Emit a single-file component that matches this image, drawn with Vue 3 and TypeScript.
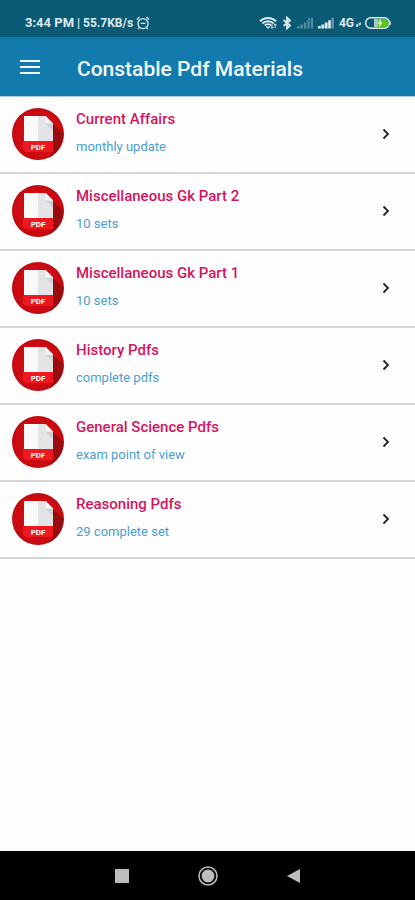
<script setup lang="ts">
interface Material {
  title: string
  note: string
}

const materials: Material[] = [
  { title: 'Current Affairs', note: 'monthly update' },
  { title: 'Miscellaneous Gk Part 2', note: '10 sets' },
  { title: 'Miscellaneous Gk Part 1', note: '10 sets' },
  { title: 'History Pdfs', note: 'complete pdfs' },
  { title: 'General Science Pdfs', note: 'exam point of view' },
  { title: 'Reasoning Pdfs', note: '29 complete set' },
]
</script>

<template>
  <div class="screen">
    <div class="status">
      <div class="status-left">
        <span>3:44 PM</span>
        <span class="rate">| 55.7KB/s</span>
        <svg width="14" height="14" viewBox="0 0 14 14" fill="none" stroke="currentColor" stroke-width="1.3" aria-hidden="true">
          <circle cx="7" cy="7.6" r="5" />
          <path d="M0.8 3.4 3.6 1M13.2 3.4 10.4 1M4.6 7.4h4.8M3.4 11.6l-1.2 1.6M10.6 11.6l1.2 1.6" />
        </svg>
      </div>
      <div class="status-right">
        <svg class="wifi" width="19" height="14" viewBox="0 0 19 14" fill="none" stroke="currentColor" aria-hidden="true">
          <path d="M1 5.2C5.4.8 12.6.8 17 5.2M3.4 7.4c3.2-3 8-3 11.2 0M5.8 9.5c1.8-1.8 4.600-1.800 6.400 0" stroke-width="2" />
          <path d="M6.6 10.4h4.8L9 13z" fill="currentColor" stroke="none" />
          <path d="M13 8.2v4M11.8 11l1.2 1.4 1.2-1.4M16.2 12V8M15 9.2 16.2 7.8l1.2 1.4" stroke-width="1" />
        </svg>
        <svg class="bluetooth" width="10" height="14" viewBox="0 0 10 14" fill="none" stroke="currentColor" stroke-width="1.8" aria-hidden="true">
          <path d="M1.6 4 8 9.6 5 12.4V1.6L8 4.4 1.6 10" />
        </svg>
        <svg class="signal faint" width="17" height="12" viewBox="0 0 17 12" fill="currentColor" aria-hidden="true">
          <path d="M0 9h2.4v2.5H0zM3.5 7.5h2.4v4H3.5zM7 5.5h2.4v6H7zM10.5 3.5h2.2v8h-2.2zM14 1h2v10.5h-2z" />
          <path d="M10.5 .5l3 3M13.5 .5l-3 3" stroke="currentColor" />
        </svg>
        <svg class="signal" width="17" height="12" viewBox="0 0 17 12" fill="currentColor" aria-hidden="true">
          <path d="M0 9h2.8v2.5H0zM3.4 7.500h2.8v4H3.4zM6.800 5.500h2.800v6H6.800zM10.200 3.200h2.600v8.300h-2.600z" />
          <path d="M13.600 1H15.600v10.500h-2z" opacity=".5" />
        </svg>
        <span class="network">4G</span>
        <svg class="data" width="5" height="5" viewBox="0 0 5 5" aria-hidden="true">
          <path d="M0 5V2.500L2 1.500V5zM2.600 4V1L5 0v3z" fill="currentColor" opacity=".8" />
        </svg>
        <svg width="28" height="14" viewBox="0 0 28 14" aria-hidden="true">
          <rect x="1.700" y="1.700" width="23.600" height="10.600" rx="5" fill="none" stroke="#e4f0f2" stroke-width="1.400" />
          <path d="M26 4.500c1 .6 1 4.400 0 5z" fill="#e4f0f2" />
          <path d="M14 3h6.500a4 4 0 0 1 0 8H14z" fill="#55c817" />
          <path d="M10 3h4v8h-4z" fill="#a9c7c9" />
          <path d="M17 2.500 13.800 7.500h2L14.800 11.500 18.500 6.400h-2z" fill="#fff" />
        </svg>
      </div>
    </div>

    <header class="appbar">
      <button class="menu" type="button" aria-label="Menu">
        <svg width="20" height="16" viewBox="0 0 20 16" aria-hidden="true">
          <path d="M0 2h20M0 8h20M0 14h20" stroke="currentColor" stroke-width="2" />
        </svg>
      </button>
      <h1>Constable Pdf Materials</h1>
    </header>

    <main>
      <ul class="list">
        <li v-for="item in materials" :key="item.title">
          <a class="row" href="#">
            <svg class="badge" width="52" height="52" viewBox="0 0 52 52" aria-hidden="true">
              <defs>
                <radialGradient id="face">
                  <stop offset=".8" stop-color="#cf0b12" />
                  <stop offset="1" stop-color="#c00a10" />
                </radialGradient>
              </defs>
              <circle cx="26" cy="26" r="26" fill="url(#face)" />
              <path d="M41 16 51.300 26A26 26 0 0 1 37 49.500L41 44z" fill="#980b0f" />
              <path d="M12 8h21.500L41 15.500V34H12z" fill="#fafafa" />
              <path d="M26 8h7.500L41 15.500V34H26z" fill="#e3e4e6" />
              <path d="M33.500 15.500H41V23z" fill="#cfd0d4" />
              <path d="M33.500 8 41 15.500h-7.500z" fill="#f4f4f6" />
              <path d="M11 33h30v11H13.500L11 41.500z" fill="#ef1820" />
              <text x="26" y="42" text-anchor="middle" font-size="8" font-weight="700" fill="#fff">PDF</text>
            </svg>
            <span class="text">
              <span class="title">{{ item.title }}</span>
              <span class="note">{{ item.note }}</span>
            </span>
            <svg class="chevron" width="8" height="12" viewBox="0 0 8 12" fill="none" aria-hidden="true">
              <path d="M1.500 1.500 6 6 1.500 10.500" stroke="#222" stroke-width="1.800" />
            </svg>
          </a>
        </li>
      </ul>
    </main>

    <nav class="navbar" aria-label="System">
      <button type="button" aria-label="Recent apps">
        <svg width="22" height="22" viewBox="0 0 22 22" aria-hidden="true"><path d="M4 4h14v14H4z" fill="#bdbdbd" /></svg>
      </button>
      <button type="button" aria-label="Home">
        <svg width="22" height="22" viewBox="0 0 22 22" aria-hidden="true">
          <circle cx="11" cy="11" r="9" fill="none" stroke="#bdbdbd" stroke-width="1.500" />
          <circle cx="11" cy="11" r="6.400" fill="#bdbdbd" />
        </svg>
      </button>
      <button type="button" aria-label="Back">
        <svg width="22" height="22" viewBox="0 0 22 22" aria-hidden="true"><path d="M4 11 17 4v14z" fill="#bdbdbd" /></svg>
      </button>
    </nav>
  </div>
</template>

<style>
body {
  margin: 0;
}
</style>

<style scoped>
.screen {
  display: flex;
  flex-direction: column;
  min-height: 100vh;
  background: #fefefe;
  font-family: Roboto, "Liberation Sans", sans-serif;
}

.status {
  display: flex;
  align-items: center;
  justify-content: space-between;
  box-sizing: border-box;
  height: 37px;
  padding: 8px 23px 0 25px;
  background: #0b5a75;
  color: #dcebef;
  font-size: 13px;
  font-weight: 700;
}

.status-left,
.status-right {
  display: flex;
  align-items: center;
}

.status-left {
  gap: 3px;
}

.rate,
.network {
  font-size: 12px;
}

.bluetooth {
  margin: 0 5px 0 4px;
}

.signal {
  margin-right: 4px;
}

.faint {
  opacity: 0.35;
}

.data {
  align-self: flex-end;
  margin: 0 3px 3px 2px;
}

.appbar {
  display: flex;
  align-items: center;
  box-sizing: border-box;
  height: 59px;
  padding: 0 20px;
  gap: 37px;
  background: #127aac;
  color: #f2f9fc;
}

h1 {
  margin: 0;
  padding-top: 4px;
  font-size: 21px;
  font-weight: 500;
  line-height: 28px;
}

button {
  display: flex;
  padding: 0;
  border: 0;
  background: none;
  color: inherit;
}

main {
  flex: 1;
  border-top: 1px solid #a9cbdc;
}

.list {
  margin: 0;
  padding: 0;
  list-style: none;
}

.row {
  display: flex;
  align-items: center;
  box-sizing: border-box;
  height: 77px;
  padding: 0 25px 1px 12px;
  gap: 12px;
  border-bottom: 2px solid #d3d6d7;
  color: inherit;
  text-decoration: none;
}

.badge {
  flex: none;
}

.text {
  display: flex;
  flex: 1;
  flex-direction: column;
  gap: 9px;
  padding-bottom: 3px;
}

.title {
  color: #d4145f;
  font-size: 15px;
  font-weight: 500;
  line-height: 20px;
}

.note {
  color: #4a9fd0;
  font-size: 13px;
  line-height: 18px;
}

.navbar {
  display: flex;
  align-items: center;
  justify-content: center;
  height: 49px;
  gap: 64px;
  background: #000;
}
</style>
